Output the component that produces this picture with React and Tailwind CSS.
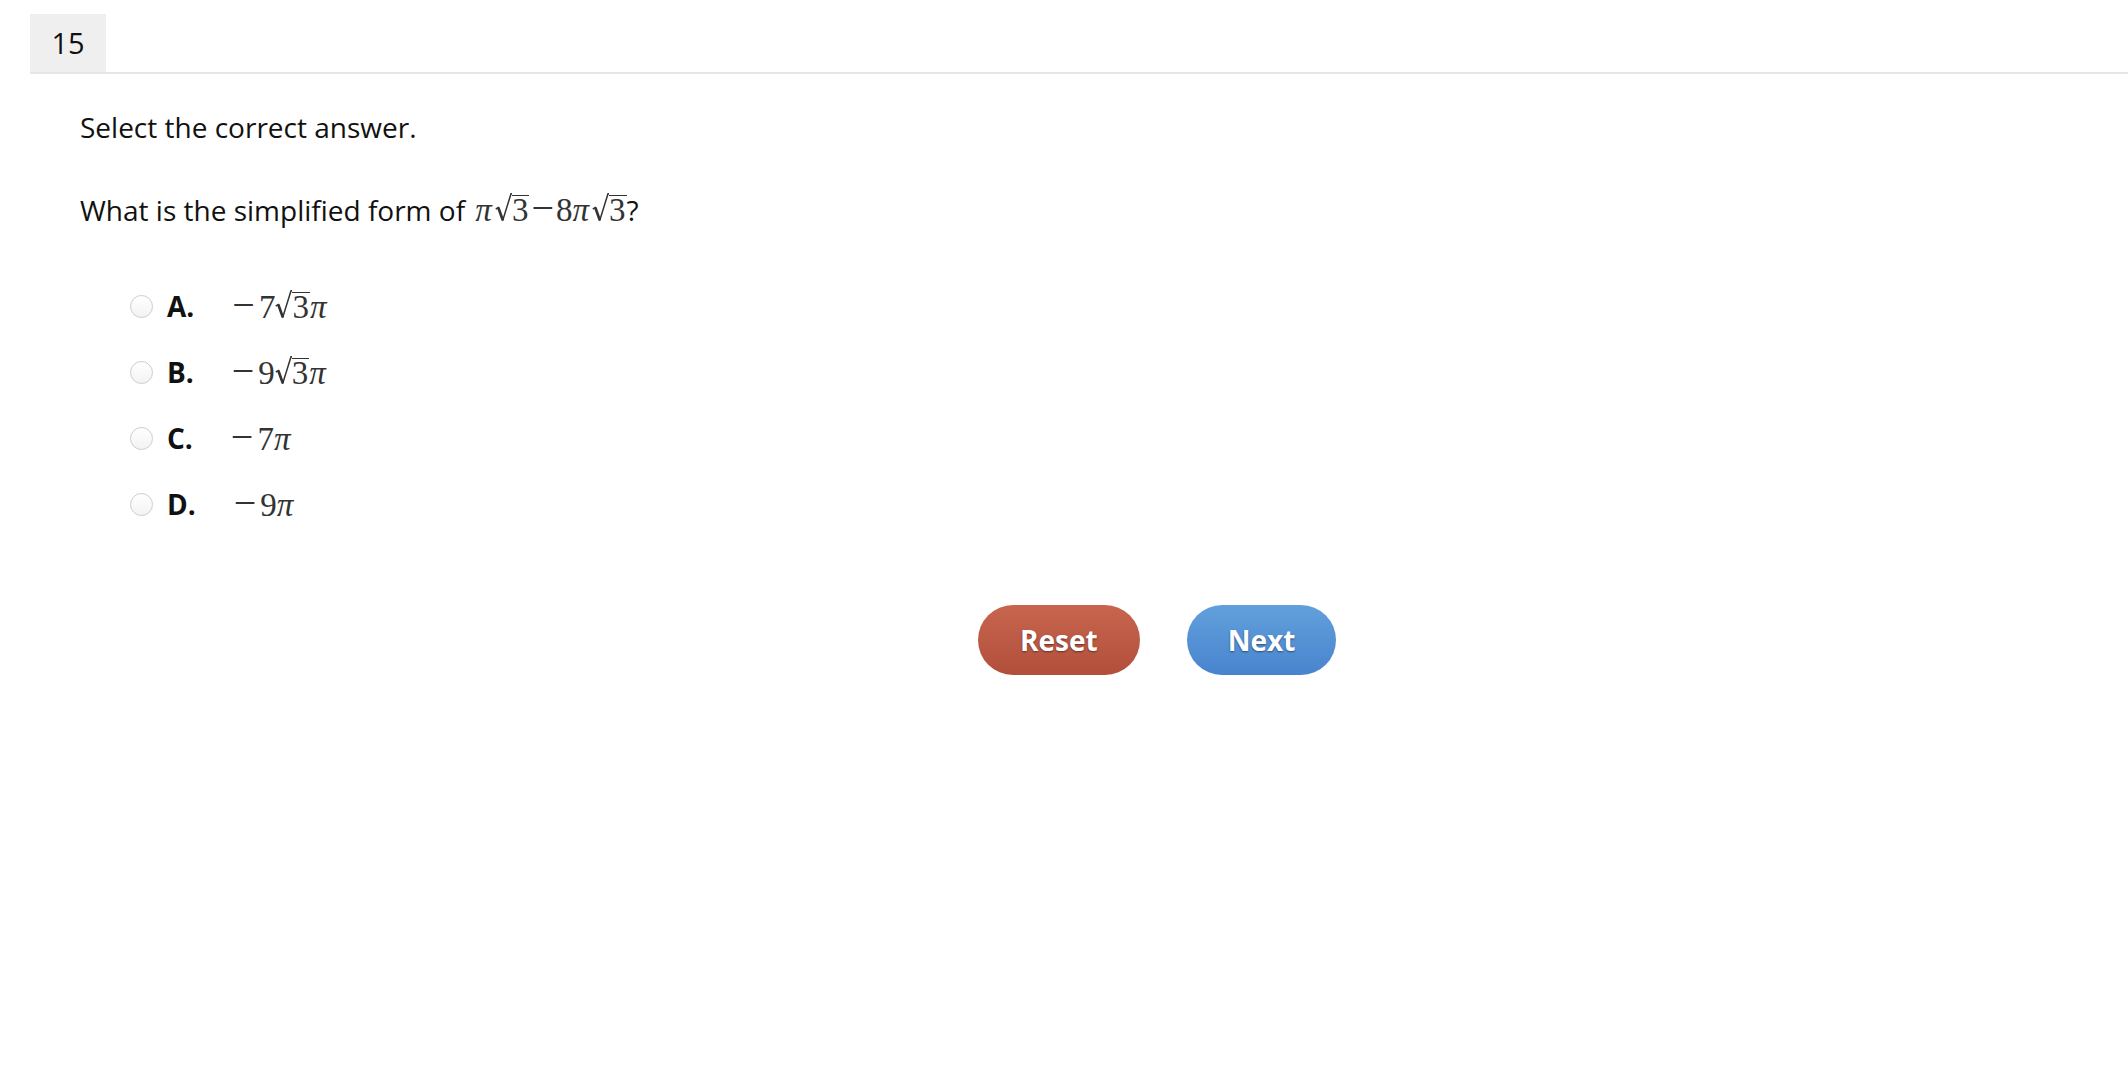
import React from 'react';

const Radical = ({ children }) => (
  <span className="inline-flex items-baseline">
    <svg width="17" height="28" viewBox="0 0 17 28" fill="none">
      <path d="M0.8 16 L3.3 14.5 L7.8 27.2 L16 0.8 L17 0.8" stroke="#333" strokeWidth="1.5" strokeLinejoin="miter" />
      <path d="M3.3 14.5 L7.8 27.2" stroke="#333" strokeWidth="2.6" />
    </svg>
    <span className="border-t-[1.6px] border-[#333] leading-[29px] pr-[1px]">{children}</span>
  </span>
);

const Pi = () => <span className="italic mr-[3px]">π</span>;
const Minus = ({ className = '' }) => <span className={'text-[40px] leading-none ' + className}>−</span>;

const mathFont = { fontFamily: '"Liberation Serif", "Times New Roman", serif' };

const options = [
  { letter: 'A.', math: <><Minus className="mr-[4px]" />7<Radical>3</Radical><Pi /></> },
  { letter: 'B.', math: <><Minus className="mr-[4px]" />9<Radical>3</Radical><Pi /></> },
  { letter: 'C.', math: <><Minus className="mr-[4px]" />7<Pi /></> },
  { letter: 'D.', math: <><Minus className="mr-[4px]" />9<Pi /></> },
];

const Math = ({ children, className = '' }) => (
  <span className={'text-[33px] leading-none text-[#333] whitespace-nowrap ' + className} style={mathFont}>{children}</span>
);

export default function App() {
  return (
    <div className="min-h-screen bg-white text-[#111] text-[28px] leading-[42px]" style={{ fontFamily: '"Open Sans", "Noto Sans", sans-serif' }}>
      <div className="pt-[14px] pl-[30px]">
        <div className="flex border-b-2 border-[#e6e6e6]">
          <div className="w-[76px] h-[58px] bg-[#efefef] flex items-center justify-center text-[29px]">15</div>
        </div>

        <div className="pl-[50px]">
          <p className="mt-[32px]">Select the correct answer.</p>
          <p className="mt-[40px]">
            What is the simplified form of{' '}
            <Math className="ml-[3px]"><Pi /><Radical>3</Radical><Minus className="mx-[2px]" />8<Pi /><Radical>3</Radical></Math>?
          </p>

          <div className="mt-[54px] pl-[50px] flex flex-col gap-[24px]">
            {options.map((o) => (
              <label key={o.letter} className="flex items-center h-[42px]">
                <span className="w-[23px] h-[23px] rounded-full border border-[#cdcdcd] bg-linear-to-b from-white to-[#f3f3f3] shrink-0" />
                <span className="ml-[14px] font-bold">{o.letter}</span>
                <span className="ml-[38px]"><Math>{o.math}</Math></span>
              </label>
            ))}
          </div>

          <div className="mt-[80px] ml-[898px] flex gap-[47px]">
            <button className="h-[70px] px-[42px] rounded-full bg-linear-to-b from-[#c7654f] to-[#b24f3b] text-white font-bold [text-shadow:0_1px_2px_rgba(0,0,0,0.45)]">Reset</button>
            <button className="h-[70px] px-[41px] rounded-full bg-linear-to-b from-[#62a0dc] to-[#4884cd] text-white font-bold [text-shadow:0_1px_2px_rgba(0,0,0,0.45)]">Next</button>
          </div>
        </div>
      </div>
    </div>
  );
}
